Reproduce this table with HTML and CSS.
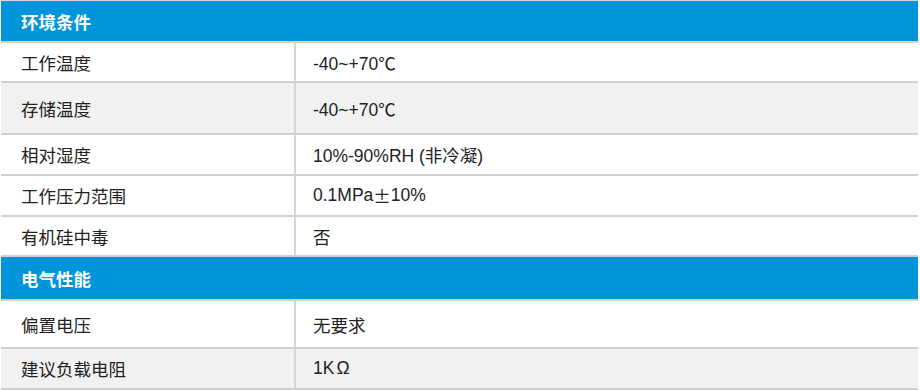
FILE: index.html
```html
<!DOCTYPE html>
<html lang="zh-CN">
<head>
<meta charset="utf-8">
<title>规格参数</title>
<link rel="stylesheet" href="styles.css">
</head>
<body>
<div class="spec">
  <div class="section h1">环境条件</div>
  <div class="row r1"><div class="label">工作温度</div><div class="value">-40~+70℃</div></div>
  <div class="row r2 alt"><div class="label">存储温度</div><div class="value">-40~+70℃</div></div>
  <div class="row r3"><div class="label">相对湿度</div><div class="value">10%-90%RH (非冷凝)</div></div>
  <div class="row r4"><div class="label">工作压力范围</div><div class="value">0.1MPa<span class="wide">±</span>10%</div></div>
  <div class="row r5"><div class="label">有机硅中毒</div><div class="value">否</div></div>
  <div class="section h2">电气性能</div>
  <div class="row r6"><div class="label">偏置电压</div><div class="value">无要求</div></div>
  <div class="row r7 alt"><div class="label">建议负载电阻</div><div class="value">1K<span class="ohm">Ω</span></div></div>
</div>
</body>
</html>
```

FILE: styles.css
```css
html, body {
  margin: 0;
  padding: 0;
  background: #ffffff;
}

.spec {
  width: 917px;
  margin-left: 1px;
  border-top: 1px solid #d8d8d8;
  font-family: "Liberation Sans", "Noto Sans CJK SC", sans-serif;
  font-size: 17.5px;
  color: #222222;
}

.section {
  box-sizing: border-box;
  display: flex;
  align-items: center;
  padding-left: 20px;
  background: #0095d9;
  color: #ffffff;
  font-weight: bold;
  border-bottom: 2px solid #d0d0d0;
}

.h1 { height: 42px; }
.h2 { height: 44px; }

.row {
  box-sizing: border-box;
  display: grid;
  grid-template-columns: 295px 1fr;
  border-bottom: 2px solid #d0d0d0;
  background: #ffffff;
}

.row.alt { background: #f0f1f0; }

.r1 { height: 40px; }
.r2 { height: 52px; }
.r3 { height: 41px; }
.r4 { height: 41px; }
.r5 { height: 40px; }
.r6 { height: 48px; }
.r7 { height: 41px; }

.label {
  display: flex;
  align-items: center;
  padding-left: 20px;
  border-right: 2px solid #d6d6d6;
}

.value {
  display: flex;
  align-items: center;
  padding-left: 17px;
  white-space: pre;
}

.wide {
  font-family: "Noto Sans CJK SC", sans-serif;
  font-feature-settings: "fwid";
  display: inline-block;
  min-width: 16px;
  text-align: center;
}

.ohm {
  margin-left: 2px;
}
```
